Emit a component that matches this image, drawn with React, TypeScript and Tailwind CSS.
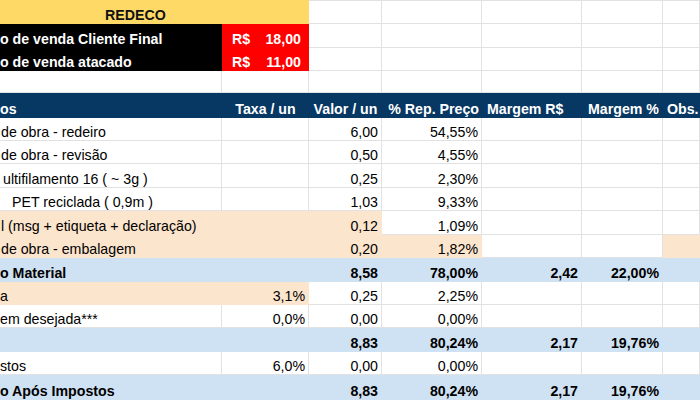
import React from "react";

type BgKey = "w" | "y" | "k" | "r" | "n" | "p" | "b";

const BG: Record<BgKey, string> = {
  w: "bg-white border-[#e2e2e2]",
  y: "bg-[#ffd966] border-[#ffd966]",
  k: "bg-black border-black",
  r: "bg-[#ff0000] border-[#ff0000]",
  n: "bg-[#073763] border-[#073763]",
  p: "bg-[#fce5cd] border-[#fce5cd]",
  b: "bg-[#cfe2f3] border-[#cfe2f3]",
};

const W = ["w-[222px]", "w-[87px]", "w-[73px]", "w-[100px]", "w-[100px]", "w-[81px]", "flex-1"];

type CellDef = {
  t?: string;
  bg?: BgKey;
  a?: "l" | "r" | "c";
  x?: string;
};

function Cell({ w, d, bold }: { w: string; d: CellDef; bold?: boolean }) {
  const bg = d.bg ?? "w";
  const align =
    d.a === "r" ? "justify-end pr-[3px]" : d.a === "c" ? "justify-center" : "justify-start";
  return (
    <div
      className={`${w} ${BG[bg]} border-r border-b shrink-0 flex items-end overflow-hidden whitespace-nowrap ${align} ${d.x ?? ""} ${bold ? "font-bold" : ""}`}
    >
      {d.t ? <span className="leading-[15px]">{d.t}</span> : null}
    </div>
  );
}

function Row({ h, cells, bold }: { h: string; cells: CellDef[]; bold?: boolean }) {
  return (
    <div className={`flex ${h}`}>
      {cells.map((c, i) => (
        <Cell key={i} w={W[i]} d={c} bold={bold} />
      ))}
    </div>
  );
}

const e: CellDef = {};

function PriceRow({ h, label, value }: { h: string; label: string; value: string }) {
  return (
    <div className={`flex ${h}`}>
      <div className="w-[222px] shrink-0 bg-black border-b border-black flex items-end font-bold text-white whitespace-nowrap overflow-hidden">
        <span className="leading-[15px]">{label}</span>
      </div>
      <div className="w-[87px] shrink-0 bg-[#ff0000] border-b border-[#ff0000] flex items-end justify-between font-bold text-white pl-[10px] pr-[8px]">
        <span className="leading-[15px]">R$</span>
        <span className="leading-[15px]">{value}</span>
      </div>
      {[W[2], W[3], W[4], W[5], W[6]].map((w, i) => (
        <div key={i} className={`${w} shrink-0 bg-white border-r border-b border-[#e2e2e2]`} />
      ))}
    </div>
  );
}

export default function App() {
  return (
    <div className="w-[700px] h-[400px] overflow-hidden bg-white text-black text-[14.2px] font-['Liberation_Sans',Arial,sans-serif]">
      {/* Row 1 */}
      <div className="flex h-[24px]">
        <div className="w-[309px] shrink-0 bg-[#ffd966] border-b border-[#ffd966] flex items-end font-bold text-[#111] pl-[105px]">
          <span className="leading-[15px]">REDECO</span>
        </div>
        {[W[2], W[3], W[4], W[5], W[6]].map((w, i) => (
          <div key={i} className={`${w} shrink-0 bg-white border-t border-r border-b border-[#e2e2e2]`} />
        ))}
      </div>
      <PriceRow h="h-[24px]" label="o de venda Cliente Final" value="18,00" />
      <PriceRow h="h-[23px]" label="o de venda atacado" value="11,00" />
      {/* Row 4 */}
      <Row h="h-[22px]" cells={[e, e, e, e, e, e, e]} />
      {/* Header */}
      <div className="flex h-[25px] bg-[#073763] text-white font-bold">
        <div className="w-[222px] shrink-0 flex items-end pb-[1px]">
          <span className="leading-[15px]">os</span>
        </div>
        <div className="w-[87px] shrink-0 flex items-end justify-center pb-[1px]">
          <span className="leading-[15px]">Taxa / un</span>
        </div>
        <div className="w-[73px] shrink-0 flex items-end justify-center pb-[1px]">
          <span className="leading-[15px]">Valor / un</span>
        </div>
        <div className="w-[100px] shrink-0 flex items-end justify-end pr-[3px] pb-[1px]">
          <span className="leading-[15px] whitespace-nowrap">% Rep. Preço</span>
        </div>
        <div className="w-[100px] shrink-0 flex items-end pl-[5px] pb-[1px]">
          <span className="leading-[15px] whitespace-nowrap">Margem R$</span>
        </div>
        <div className="w-[81px] shrink-0 flex items-end justify-end pr-[4px] pb-[1px]">
          <span className="leading-[15px] whitespace-nowrap">Margem %</span>
        </div>
        <div className="flex-1 flex items-end pl-[4px] pb-[1px]">
          <span className="leading-[15px] whitespace-nowrap">Obs.</span>
        </div>
      </div>
      {/* Data rows */}
      <Row
        h="h-[23px]"
        cells={[{ t: "de obra - redeiro", x: "pl-[1px]" }, e, { t: "6,00", a: "r" }, { t: "54,55%", a: "r" }, e, e, e]}
      />
      <Row
        h="h-[23px]"
        cells={[{ t: "de obra - revisão", x: "pl-[1px]" }, e, { t: "0,50", a: "r" }, { t: "4,55%", a: "r" }, e, e, e]}
      />
      <Row
        h="h-[24px]"
        cells={[{ t: "ultifilamento 16 ( ~ 3g )", x: "pl-[3px]" }, e, { t: "0,25", a: "r" }, { t: "2,30%", a: "r" }, e, e, e]}
      />
      <Row
        h="h-[23px]"
        cells={[{ t: "PET reciclada ( 0,9m )", x: "pl-[12px]" }, e, { t: "1,03", a: "r" }, { t: "9,33%", a: "r" }, e, e, e]}
      />
      <Row
        h="h-[24px]"
        cells={[
          { t: "l (msg + etiqueta + declaração)", bg: "p", x: "pl-[1px] overflow-visible" },
          { bg: "p" },
          { t: "0,12", a: "r", bg: "p" },
          { t: "1,09%", a: "r" },
          e,
          e,
          e,
        ]}
      />
      <Row
        h="h-[23px]"
        cells={[
          { t: "de obra - embalagem", bg: "p", x: "pl-[1px]" },
          { bg: "p" },
          { t: "0,20", a: "r", bg: "p" },
          { t: "1,82%", a: "r", bg: "p" },
          e,
          e,
          { bg: "p" },
        ]}
      />
      <Row
        h="h-[24px]"
        bold
        cells={[
          { t: "o Material", bg: "b" },
          { bg: "b" },
          { t: "8,58", a: "r", bg: "b" },
          { t: "78,00%", a: "r", bg: "b" },
          { t: "2,42", a: "r", bg: "b" },
          { t: "22,00%", a: "r", bg: "b" },
          { bg: "b" },
        ]}
      />
      <Row
        h="h-[23px]"
        cells={[
          { t: "a", bg: "p" },
          { t: "3,1%", a: "r", bg: "p" },
          { t: "0,25", a: "r" },
          { t: "2,25%", a: "r" },
          e,
          e,
          e,
        ]}
      />
      <Row
        h="h-[23px]"
        cells={[{ t: "em desejada***" }, { t: "0,0%", a: "r" }, { t: "0,00", a: "r" }, { t: "0,00%", a: "r" }, e, e, e]}
      />
      <Row
        h="h-[24px]"
        bold
        cells={[
          { bg: "b" },
          { bg: "b" },
          { t: "8,83", a: "r", bg: "b" },
          { t: "80,24%", a: "r", bg: "b" },
          { t: "2,17", a: "r", bg: "b" },
          { t: "19,76%", a: "r", bg: "b" },
          { bg: "b" },
        ]}
      />
      <Row
        h="h-[23px]"
        cells={[{ t: "stos" }, { t: "6,0%", a: "r" }, { t: "0,00", a: "r" }, { t: "0,00%", a: "r" }, e, e, e]}
      />
      <Row
        h="h-[25px]"
        bold
        cells={[
          { t: "o Após Impostos", bg: "b" },
          { bg: "b" },
          { t: "8,83", a: "r", bg: "b" },
          { t: "80,24%", a: "r", bg: "b" },
          { t: "2,17", a: "r", bg: "b" },
          { t: "19,76%", a: "r", bg: "b" },
          { bg: "b" },
        ]}
      />
    </div>
  );
}
